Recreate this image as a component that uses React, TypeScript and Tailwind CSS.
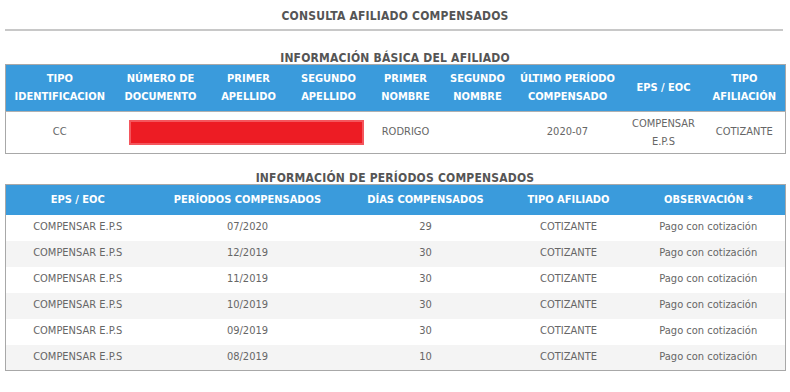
const basicHeaders: [string, string][] = [
  ['TIPO', 'IDENTIFICACION'],
  ['NÚMERO DE', 'DOCUMENTO'],
  ['PRIMER', 'APELLIDO'],
  ['SEGUNDO', 'APELLIDO'],
  ['PRIMER', 'NOMBRE'],
  ['SEGUNDO', 'NOMBRE'],
  ['ÚLTIMO PERÍODO', 'COMPENSADO'],
  ['EPS / EOC', ''],
  ['TIPO', 'AFILIACIÓN'],
];

const basicWidths = ['w-[108px]', 'w-[94px]', 'w-[82px]', 'w-[78px]', 'w-[76px]', 'w-[68px]', 'w-[112px]', 'w-[80px]', 'w-[82px]'];

const periods = [
  { periodo: '07/2020', dias: '29' },
  { periodo: '12/2019', dias: '30' },
  { periodo: '11/2019', dias: '30' },
  { periodo: '10/2019', dias: '30' },
  { periodo: '09/2019', dias: '30' },
  { periodo: '08/2019', dias: '10' },
];

export default function App() {
  return (
    <div className="w-[790px] h-[392px] bg-white px-[5px] font-['DejaVu_Sans_Condensed','DejaVu_Sans',sans-serif] text-[11px] text-[#666666]">
      {/* Page title */}
      <div className="pt-[9px] pb-[6px] text-center text-[12px] font-bold text-[#555555] leading-[14px] tracking-[0.2px]">
        CONSULTA AFILIADO COMPENSADOS
      </div>
      <div className="h-[2px] w-[778px] bg-[#c8c8c8]" />

      {/* Basic info */}
      <div className="mt-[20px] text-center text-[12px] font-bold text-[#555555] leading-[14px] tracking-[0.2px]">
        INFORMACIÓN BÁSICA DEL AFILIADO
      </div>
      <table className="mt-[-1px] w-[780px] table-fixed border-collapse border border-[#a8a8a8]">
        <thead>
          <tr className="bg-[#3a9bdc]">
            {basicHeaders.map(([a, b], i) => (
              <th key={i} className={`${basicWidths[i]} h-[47px] p-0 text-center align-middle font-bold text-white leading-[18px]`}>
                <div>{a}</div>
                {b && <div>{b}</div>}
              </th>
            ))}
          </tr>
        </thead>
        <tbody>
          <tr className="border-t border-[#b0b0b0]">
            <td className="h-[42px] p-0 text-center">CC</td>
            <td colSpan={3} className="p-0">
              <div className="ml-[15px] h-[25px] w-[235px] border-2 border-[#f4565d] bg-[#ed1c24]" />
            </td>
            <td className="text-center">RODRIGO</td>
            <td />
            <td className="text-center">2020-07</td>
            <td className="text-center leading-[18px]">
              <div>COMPENSAR</div>
              <div>E.P.S</div>
            </td>
            <td className="text-center">COTIZANTE</td>
          </tr>
        </tbody>
      </table>

      {/* Periods */}
      <div className="mt-[17px] text-center text-[12px] font-bold text-[#555555] leading-[14px] tracking-[0.2px]">
        INFORMACIÓN DE PERÍODOS COMPENSADOS
      </div>
      <table className="mt-[-1px] w-[780px] table-fixed border-collapse border border-[#a8a8a8]">
        <thead>
          <tr className="bg-[#3a9bdc] text-white font-bold">
            <th className="w-[144px] h-[30px] p-0 text-center">EPS / EOC</th>
            <th className="w-[196px] p-0 text-center">PERÍODOS COMPENSADOS</th>
            <th className="w-[160px] p-0 text-center">DÍAS COMPENSADOS</th>
            <th className="w-[126px] p-0 text-center">TIPO AFILIADO</th>
            <th className="w-[154px] p-0 text-center">OBSERVACIÓN *</th>
          </tr>
        </thead>
        <tbody>
          {periods.map((p, i) => (
            <tr key={i} className={i % 2 === 1 ? 'bg-[#f4f4f4]' : 'bg-white'}>
              <td className="h-[26px] p-0 text-center">COMPENSAR E.P.S</td>
              <td className="p-0 text-center">{p.periodo}</td>
              <td className="p-0 text-center">{p.dias}</td>
              <td className="p-0 text-center">COTIZANTE</td>
              <td className="p-0 text-center">Pago con cotización</td>
            </tr>
          ))}
        </tbody>
      </table>
    </div>
  );
}
